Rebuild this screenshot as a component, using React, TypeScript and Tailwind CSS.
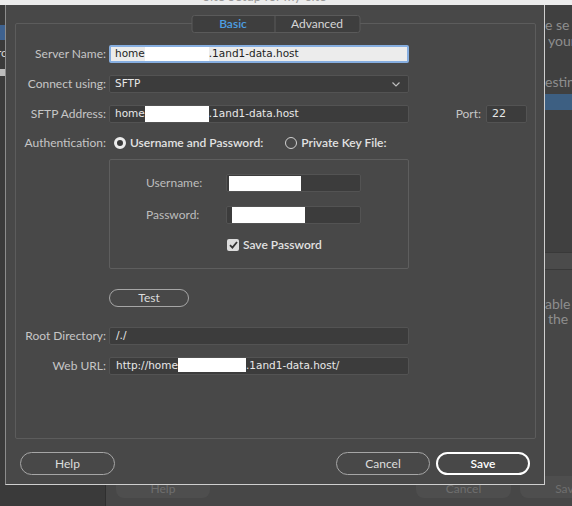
import { ReactNode } from "react";

const lato = "font-['Lato',sans-serif]";
const mono = "font-['DejaVu_Sans',sans-serif] text-[10.5px]";

type FieldProps = {
  children?: ReactNode;
  className?: string;
};

const Field = ({ children, className = "" }: FieldProps) => (
  <div
    className={`flex h-[18px] shrink-0 items-center overflow-hidden whitespace-nowrap rounded-[2px] border border-[#535353] bg-[#3c3c3c] text-[#e8e8e8] ${mono} ${className}`}
  >
    {children}
  </div>
);

type RowProps = {
  label: string;
  children: ReactNode;
  className?: string;
};

const Row = ({ label, children, className = "" }: RowProps) => (
  <div className={`flex items-center ${className}`}>
    <div className="w-[90px] shrink-0 text-right text-[12px] leading-[18px] text-[#c6c6c6]">{label}</div>
    <div className="ml-[3px] flex flex-1 items-center">{children}</div>
  </div>
);

const Pill = ({ children, className = "" }: FieldProps) => (
  <button
    className={`flex items-center justify-center rounded-full text-[12px] ${className}`}
  >
    {children}
  </button>
);

// window behind the dialog, only its edges show
const Backdrop = () => (
  <div className="flex h-full flex-col">
    <div className="h-[5px] shrink-0 overflow-hidden bg-[#ececec]">
      <p className="-mt-[12px] pl-[203px] text-[13px] leading-[16px] text-[#9a9a9a]">Site Setup for my-site</p>
    </div>
    <div className="flex min-h-0 flex-1">
      <div className="w-[106px] shrink-0 border-r border-[#2f2f2f] bg-[#3a3a3a] pt-[20px]">
        <div className="h-[15px] bg-[#3e6290]" />
        <p className="-ml-[3px] mt-[6px] text-[12px] leading-[14px] text-[#d8d8d8]">ro</p>
        <div className="mt-[9px] h-[7px] w-[5px] bg-[#bcbcbc]" />
      </div>
      <div className="flex min-w-0 flex-1 flex-col bg-[#474747]">
        <div className="flex h-[247px] flex-col items-end bg-[#404040] pt-[12px] text-[14px] leading-[16px] text-[#8e8e8e]">
          <p className="w-[27px] overflow-hidden whitespace-nowrap">e se</p>
          <p className="w-[24px] overflow-hidden whitespace-nowrap">your</p>
          <p className="mt-[25px] w-[27px] overflow-hidden whitespace-nowrap">esting</p>
          <div className="mt-[4px] h-[16px] w-full bg-[#3d5f82]" />
        </div>
        <div className="h-[18px] border-y border-[#393939] bg-[#4b4b4b]" />
        <div className="flex flex-1 flex-col items-end pt-[26px] text-[14px] leading-[15px] text-[#8e8e8e]">
          <p className="w-[27px] overflow-hidden whitespace-nowrap">able th</p>
          <p className="w-[24px] overflow-hidden whitespace-nowrap">the</p>
        </div>
        <div className="flex shrink-0 overflow-hidden pb-[8px] text-[12px] text-[#6e6e6e]">
          <div className="ml-[10px] flex h-[22px] w-[94px] shrink-0 items-center justify-center rounded-[8px] bg-[#4e4e4e] pt-[4px]">Help</div>
          <div className="ml-[206px] flex h-[22px] w-[95px] shrink-0 items-center justify-center rounded-[8px] bg-[#4e4e4e] pt-[4px]">Cancel</div>
          <div className="ml-[9px] flex h-[22px] w-[95px] shrink-0 items-center justify-center rounded-[8px] bg-[#4e4e4e] pt-[4px]">Save</div>
        </div>
      </div>
    </div>
  </div>
);

export default function App() {
  return (
    <div className={`relative h-[506px] w-[572px] overflow-hidden bg-[#474747] ${lato}`}>
      <Backdrop />

      <div className="absolute left-[5px] top-[5px] flex h-[480px] w-[540px] flex-col border-b border-l border-r border-b-[#cfcfcf] border-l-[#8c8c8c] border-r-[#cfcfcf] bg-[#484848]">
        <div className="relative ml-[9px] mr-[8px] mt-[18px] flex h-[416px] flex-col rounded-[2px] border border-[#5c5c5c] pt-[21px]">
          <div className="absolute -top-[9px] left-1/2 flex h-[18px] -translate-x-1/2 overflow-hidden rounded-[3px] border border-[#5a5a5a] bg-[#3e3e3e] text-[12px]">
            <div className="flex w-[83px] items-center justify-center border-r border-[#5a5a5a] font-semibold text-[#4d9ee2]">Basic</div>
            <div className="flex w-[84px] items-center justify-center text-[#d6d6d6]">Advanced</div>
          </div>

          <Row label="Server Name:">
            <div className={`flex h-[18px] w-[300px] items-center overflow-hidden whitespace-nowrap rounded-[2px] border-2 border-[#86aee0] bg-[#ececec] pl-[4px] text-[#1e1e1e] ${mono}`}>
              home
              <span className="inline-block h-[15px] w-[64px] bg-white" />
              .1and1-data.host
            </div>
          </Row>

          <Row label="Connect using:" className="mt-[12px]">
            <Field className="w-[300px] justify-between pl-[5px] pr-[8px]">
              SFTP
              <svg width="8" height="5" viewBox="0 0 8 5" fill="none" stroke="#bdbdbd" strokeWidth="1.2">
                <path d="M0.5 0.5 L4 4 L7.5 0.5" />
              </svg>
            </Field>
          </Row>

          <Row label="SFTP Address:" className="mt-[12px]">
            <Field className="w-[300px] pl-[5px]">
              home
              <span className="inline-block h-[16px] w-[64px] bg-white" />
              .1and1-data.host
            </Field>
            <div className="ml-auto mr-[8px] flex items-center">
              <span className="text-[12px] text-[#c6c6c6]">Port:</span>
              <Field className="ml-[5px] w-[41px] pl-[5px] text-[11px]">22</Field>
            </div>
          </Row>

          <Row label="Authentication:" className="mt-[11px]">
            <div className="ml-[5px] flex items-center text-[12px] font-semibold text-[#e2e2e2]">
              <span className="h-[12px] w-[12px] rounded-full border-[3px] border-[#ececec] bg-[#3a3a3a]" />
              <span className="ml-[4px]">Username and Password:</span>
              <span className="ml-[22px] h-[12px] w-[12px] rounded-full border border-[#d0d0d0]" />
              <span className="ml-[4px]">Private Key File:</span>
            </div>
          </Row>

          <div className="ml-[93px] mt-[7px] flex h-[110px] w-[300px] flex-col rounded-[2px] border border-[#5e5e5e] pl-[36px] pt-[14px]">
            <div className="flex items-center">
              <span className="w-[80px] text-[12px] text-[#bdbdbd]">Username:</span>
              <Field className="w-[135px] pl-[2px]">
                <span className="inline-block h-[15px] w-[72px] bg-white" />
              </Field>
            </div>
            <div className="mt-[14px] flex items-center">
              <span className="w-[80px] text-[12px] text-[#bdbdbd]">Password:</span>
              <Field className="w-[135px] items-end pl-[5px]">
                <span className="inline-block h-[16px] w-[73px] bg-white" />
              </Field>
            </div>
            <div className="mt-[12px] flex items-center pl-[81px]">
              <span className="flex h-[12px] w-[12px] items-center justify-center rounded-[2px] bg-[#dcdcdc]">
                <svg width="9" height="8" viewBox="0 0 9 8" fill="none" stroke="#333" strokeWidth="1.8">
                  <path d="M1 4.2 L3.4 6.6 L8 1" />
                </svg>
              </span>
              <span className="ml-[4px] text-[12px] font-semibold text-[#e2e2e2]">Save Password</span>
            </div>
          </div>

          <Pill className="ml-[93px] mt-[20px] h-[18px] w-[80px] border border-[#a6a6a6] text-[#dcdcdc]">Test</Pill>

          <Row label="Root Directory:" className="mt-[20px]">
            <Field className="w-[300px] pl-[6px]">/./</Field>
          </Row>

          <Row label="Web URL:" className="mt-[12px]">
            <Field className="w-[300px] pl-[6px]">
              http://home
              <span className="inline-block h-[14px] w-[68px] self-start bg-white" />
              .1and1-data.host/
            </Field>
          </Row>
        </div>

        <div className="mt-[13px] flex items-center px-[14px]">
          <Pill className="h-[23px] w-[95px] border border-[#a6a6a6] text-[#dedede]">Help</Pill>
          <Pill className="ml-auto h-[23px] w-[94px] border border-[#a6a6a6] text-[#dedede]">Cancel</Pill>
          <Pill className="ml-[6px] h-[23px] w-[94px] border-2 border-white font-semibold text-white">Save</Pill>
        </div>
      </div>
    </div>
  );
}
